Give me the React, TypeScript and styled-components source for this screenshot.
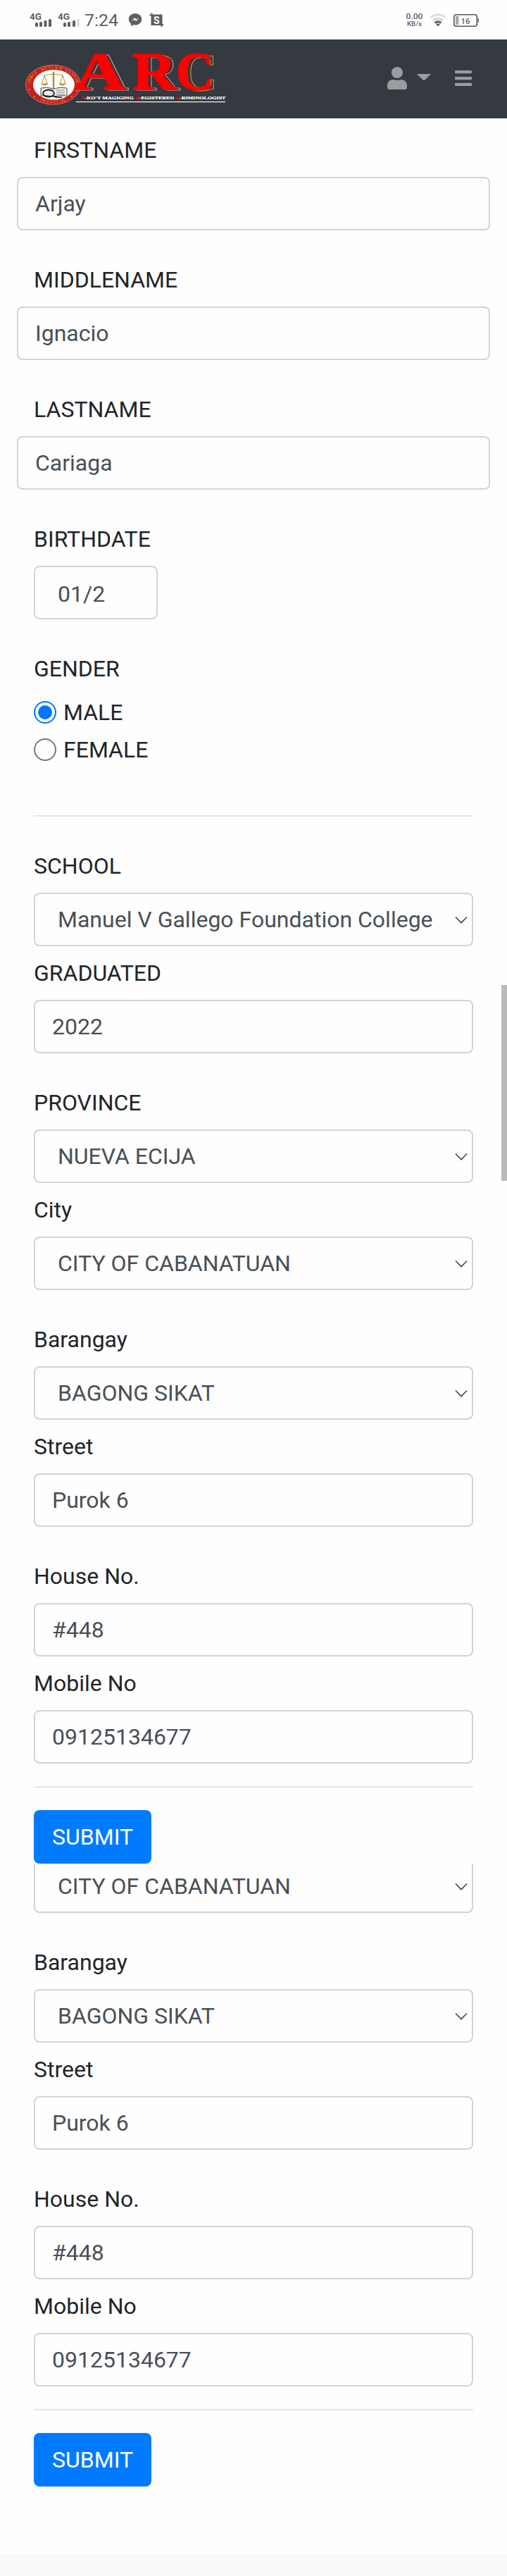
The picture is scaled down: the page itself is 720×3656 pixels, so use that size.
import React from 'react';
import styled, { createGlobalStyle } from 'styled-components';

const Global = createGlobalStyle`
  * { box-sizing: border-box; }
  body { margin: 0; background: #fefefe; color: #212529; font-family: Roboto, sans-serif; font-size: 32px; line-height: 48px; }
  input, select, button { font-family: inherit; font-size: inherit; line-height: inherit; margin: 0; }
`;

const Page = styled.div`
  position: relative;
  width: 720px;
  height: 3656px;
  display: flex;
  flex-direction: column;
  overflow: hidden;
`;

const StatusBar = styled.header`
  height: 56px;
  flex: none;
  svg { display: block; }
`;

const NavBar = styled.nav`
  height: 112px;
  flex: none;
  display: flex;
  justify-content: space-between;
  background: #343a40;
  svg { display: block; }
`;

const Form = styled.form`
  flex: none;
  display: flex;
  flex-direction: column;
  padding: 19px 48px 0;
`;

const Group = styled.div<{ $wide?: boolean; $after?: number }>`
  display: flex;
  flex-direction: column;
  margin-bottom: ${(p) => p.$after ?? 44}px;
  ${(p) => p.$wide && 'margin-left: -24px; margin-right: -24px;'}
`;

const Label = styled.label<{ $wide?: boolean }>`
  height: 48px;
  margin-bottom: 16px;
  padding-top: 2px;
  ${(p) => p.$wide && 'padding-left: 24px;'}
`;

const Input = styled.input<{ $short?: boolean }>`
  width: ${(p) => (p.$short ? '176px' : '100%')};
  height: 76px;
  border: 2px solid #ced4da;
  border-radius: 8px;
  padding: ${(p) => (p.$short ? '3px 32px 0' : '0 24px')};
  background: #fefefe;
  color: #495057;
  outline: none;
`;

const SelectWrap = styled.div`
  position: relative;
`;

const Select = styled.select`
  display: block;
  appearance: none;
  width: 100%;
  height: 76px;
  border: 2px solid #ced4da;
  border-radius: 8px;
  padding: 0 40px 0 32px;
  background: #fefefe;
  color: #495057;
  opacity: 1;
`;

const Chevron = styled.svg`
  position: absolute;
  right: 8px;
  top: 33px;
`;

const RadioRow = styled.div`
  display: flex;
  align-items: center;
  gap: 10px;
  height: 48px;
  margin-bottom: 5px;
`;

const Radio = styled.span<{ $on?: boolean }>`
  width: 32px;
  height: 32px;
  border-radius: 50%;
  border: 2px solid ${(p) => (p.$on ? '#0075ff' : '#767676')};
  padding: 4px;
  &::after {
    content: '';
    display: block;
    width: 20px;
    height: 20px;
    border-radius: 50%;
    background: ${(p) => (p.$on ? '#0075ff' : 'transparent')};
  }
`;

const Rule = styled.hr<{ $after: number }>`
  width: 100%;
  height: 2px;
  border: 0;
  margin: 0 0 ${(p) => p.$after}px;
  background: #e4e5e5;
`;

const Submit = styled.button`
  align-self: flex-start;
  width: 167px;
  height: 76px;
  border: 0;
  border-radius: 8px;
  padding: 0;
  background: #007bff;
  color: #fff;
`;

const Cropped = styled.div`
  height: 70px;
  margin-bottom: 44px;
  overflow: hidden;
  display: flex;
  flex-direction: column;
  justify-content: flex-end;
`;

const Footer = styled.footer`
  margin-top: auto;
  height: 31px;
  flex: none;
  background: #f8f9fb;
`;

const ScrollThumb = styled.div`
  position: absolute;
  right: 0;
  top: 1398px;
  width: 8px;
  height: 278px;
  background: #bababa;
`;

function TextField({ label, value, wide, short, after }: { label: string; value: string; wide?: boolean; short?: boolean; after?: number }) {
  return (
    <Group $wide={wide} $after={after}>
      <Label $wide={wide}>{label}</Label>
      <Input $short={short} defaultValue={value} />
    </Group>
  );
}

function Picker({ value }: { value: string }) {
  return (
    <SelectWrap>
      <Select defaultValue={value}>
        <option>{value}</option>
      </Select>
      <Chevron width="18" height="12" viewBox="0 0 18 12" fill="none" stroke="#495057" strokeWidth="1.7">
        <path d="M1 1.5 9 9.7 17 1.5" />
      </Chevron>
    </SelectWrap>
  );
}

function SelectField({ label, value, after }: { label: string; value: string; after?: number }) {
  return (
    <Group $after={after}>
      <Label>{label}</Label>
      <Picker value={value} />
    </Group>
  );
}

function AddressTail() {
  return (
    <>
      <SelectField label="Barangay" value="BAGONG SIKAT" after={12} />
      <TextField label="Street" value="Purok 6" />
      <TextField label="House No." value="#448" after={12} />
      <TextField label="Mobile No" value="09125134677" after={32} />
      <Rule $after={32} />
      <Submit type="button">SUBMIT</Submit>
    </>
  );
}

function StatusIcons() {
  return (
    <svg width="720" height="56" viewBox="0 0 720 56" fontFamily="Roboto, sans-serif" fill="#5f5f5f">
      <text x="42" y="28" fontSize="13" fontWeight="700" textLength="17" lengthAdjust="spacingAndGlyphs">4G</text>
      <rect x="50" y="32" width="4" height="6" rx="1.5" />
      <rect x="56" y="31" width="4" height="7" rx="1.5" />
      <rect x="62.500" y="29" width="4" height="9" rx="1.500" />
      <rect x="69" y="27" width="4" height="11" rx="1.5" />
      <text x="82" y="28" fontSize="13" fontWeight="700" textLength="17" lengthAdjust="spacingAndGlyphs">4G</text>
      <rect x="90" y="32" width="4" height="6" rx="1.5" />
      <rect x="96" y="31" width="4" height="7" rx="1.5" />
      <rect x="103" y="29" width="4" height="9" rx="1.5" />
      <rect x="109" y="27" width="4" height="11" rx="1.5" fill="#dedede" />
      <text x="120" y="37" fontSize="24" textLength="48" lengthAdjust="spacingAndGlyphs">7:24</text>
      <path d="M192 19c-5.200 0-9.200 3.600-9.200 8.300 0 2.600 1.200 4.800 3.200 6.300v3.600l3.300-1.900c.9.200 1.800.3 2.700.3 5.200 0 9.200-3.600 9.200-8.300S197.200 19 192 19Z" />
      <path d="m186.500 30 4.600-4.700 2.500 2.200 4-2.200-4.500 4.700-2.500-2.200Z" fill="#fefefe" />
      <path d="M212.500 21.500h17V38M215.500 18.500V35H232" fill="none" stroke="#5f5f5f" strokeWidth="2" />
      <rect x="215.500" y="22" width="13.500" height="13" />
      <text x="222.200" y="33.500" fontSize="14" fontWeight="700" fill="#fefefe" textAnchor="middle">S</text>
      <text x="576.500" y="27" fontSize="11.500" fontWeight="500" textLength="24" lengthAdjust="spacingAndGlyphs">0.00</text>
      <text x="578" y="37" fontSize="9" fontWeight="500" textLength="21" lengthAdjust="spacingAndGlyphs">KB/s</text>
      <g fill="none" strokeWidth="3">
        <path d="M611.500 24.500q10.500-7.500 21 0" stroke="#dedede" />
        <path d="M615 29q7-5 14 0" stroke="#d4d4d4" />
        <path d="M617.500 32.500q4.500-3.300 9 0" stroke="#5f5f5f" />
      </g>
      <path d="M619 34.500q3-2 6 0l-3 3Z" />
      <rect x="644.800" y="20.800" width="32.500" height="16.500" rx="3" fill="none" stroke="#555" strokeWidth="1.600" />
      <rect x="647" y="23" width="4.500" height="12" fill="#aaa" />
      <rect x="678.500" y="26" width="1.500" height="6" />
      <text x="654.500" y="34" fontSize="11.500" fontWeight="500" textLength="13" lengthAdjust="spacingAndGlyphs">16</text>
    </svg>
  );
}

const letters = [
  { ch: 'A', x: 106, w: 72 },
  { ch: 'R', x: 188, w: 62 },
  { ch: 'C', x: 250, w: 54 },
];

const SEAL_CX = 75.5;
const SEAL_CY = 120.3;

// Glyph positions and rotations that run a word along the seal's oval rim.
function alongRim(word: string, rx: number, ry: number, from: number, to: number) {
  const x: string[] = [];
  const y: string[] = [];
  const rotate: string[] = [];
  const dir = to > from ? 1 : -1;
  for (let i = 0; i < word.length; i += 1) {
    const t = ((from + ((to - from) * i) / (word.length - 1)) * Math.PI) / 180;
    x.push((SEAL_CX + rx * Math.cos(t)).toFixed(1));
    y.push((SEAL_CY + ry * Math.sin(t)).toFixed(1));
    rotate.push(((Math.atan2(dir * ry * Math.cos(t), -dir * rx * Math.sin(t)) * 180) / Math.PI).toFixed(0));
  }
  return { x: x.join(' '), y: y.join(' '), rotate: rotate.join(' ') };
}

function Logo() {
  return (
    <svg width="340" height="112" viewBox="0 56 340 112" fontFamily="'Liberation Serif', serif">
      <ellipse cx="75.500" cy="120.300" rx="39" ry="28" fill="#c4201d" stroke="#d8877c" strokeWidth=".8" />
      <ellipse cx="76.500" cy="120.300" rx="29.500" ry="21.300" fill="#fff" />
      <g fontSize="6" fill="#e2a13c">
        <text {...alongRim('OMSCI REVIEW CENTER', 32.5, 22.8, 186, 346)}>OMSCI REVIEW CENTER</text>
        <text {...alongRim('OFFICIAL', 35.5, 26.3, 121, 65)}>OFFICIAL</text>
        <circle cx="42" cy="127" r="1" />
        <circle cx="49" cy="137" r="1" />
        <circle cx="109" cy="129" r="1" />
        <circle cx="102" cy="137" r="1" />
      </g>
      <g fill="none" stroke="#333" strokeWidth=".9">
        <path d="M58 125q9-2 18 1 9-3 19-1v11q-10-1-19 1-9-2-18-1Z" fill="#eee" />
        <ellipse cx="69" cy="132.500" rx="8" ry="5" stroke="#111" strokeWidth="1.800" />
        <path d="M76 126v10M80 128h12M80 131h12M80 134h12" stroke="#777" />
        <path d="m75 136 5 2h8" stroke="#111" strokeWidth="1.500" />
      </g>
      <g fill="none" stroke="#b98a35" strokeWidth="1">
        <path d="M76 102v23" strokeWidth="2.500" />
        <path d="M63 107q13-4 26 0M63 107l-4 12M63 107l4 12M89 107l-4 12M89 107l4 12" />
        <path d="M59 119h9q-4 4-9 0M84 119h9q-4 4-9 0" fill="#c89a45" />
      </g>
      {letters.map((l) => (
        <text key={l.ch} x={l.x + 5} y="128" fontSize="77" fontWeight="700" textLength={l.w} lengthAdjust="spacingAndGlyphs" fill="#343a40" stroke={l.ch === 'C' ? '#e09a3c' : '#d98b8f'} strokeWidth="1">{l.ch}</text>
      ))}
      {letters.map((l) => (
        <text key={l.ch} x={l.x} y="127" fontSize="77" fontWeight="700" textLength={l.w} lengthAdjust="spacingAndGlyphs" fill="#fe0000" stroke="#fe0000" strokeWidth="1.500">{l.ch}</text>
      ))}
      <text x="114.500" y="140.500" fontSize="6.800" fontWeight="700" fill="#fff" textLength="206" lengthAdjust="spacingAndGlyphs" stroke="#fff" strokeWidth=".2">
        <tspan fill="#e00" stroke="#e00">A</tspan>-KO'Y MAGIGING <tspan fill="#e00" stroke="#e00">R</tspan>-EGISTERED <tspan fill="#e00" stroke="#e00">C</tspan>-RIMINOLOGIST
      </text>
      <rect x="108" y="144" width="212" height="1.200" fill="#fff" />
    </svg>
  );
}

function NavIcons() {
  return (
    <svg width="180" height="112" viewBox="540 56 180 112" fill="#9a9da0">
      <circle cx="564" cy="103" r="8" />
      <path d="M550 124v-2.500c0-5 3.500-8.500 8-8.500 2 0 3 .8 6 .8s4-.8 6-.8c4.500 0 8 3.500 8 8.500v2.500q0 3-3 3h-22q-3 0-3-3Z" />
      <path d="M592 105h20l-8.300 8.300q-1.700 1.500-3.400 0Z" />
      <rect x="646" y="100" width="24" height="4.300" rx="1" />
      <rect x="646" y="109" width="24" height="4.300" rx="1" />
      <rect x="646" y="117.800" width="24" height="4.300" rx="1" />
    </svg>
  );
}

export default function App() {
  return (
    <Page>
      <Global />
      <StatusBar><StatusIcons /></StatusBar>
      <NavBar><Logo /><NavIcons /></NavBar>
      <Form>
        <TextField label="FIRSTNAME" value="Arjay" wide />
        <TextField label="MIDDLENAME" value="Ignacio" wide />
        <TextField label="LASTNAME" value="Cariaga" wide />
        <TextField label="BIRTHDATE" value="01/2" short />
        <Group $after={64}>
          <Label>GENDER</Label>
          <RadioRow><Radio $on />MALE</RadioRow>
          <RadioRow><Radio />FEMALE</RadioRow>
        </Group>
        <Rule $after={44} />
        <SelectField label="SCHOOL" value="Manuel V Gallego Foundation College" after={12} />
        <TextField label="GRADUATED" value="2022" />
        <SelectField label="PROVINCE" value="NUEVA ECIJA" after={12} />
        <SelectField label="City" value="CITY OF CABANATUAN" />
        <AddressTail />
        <Cropped><Picker value="CITY OF CABANATUAN" /></Cropped>
        <AddressTail />
      </Form>
      <Footer />
      <ScrollThumb />
    </Page>
  );
}
